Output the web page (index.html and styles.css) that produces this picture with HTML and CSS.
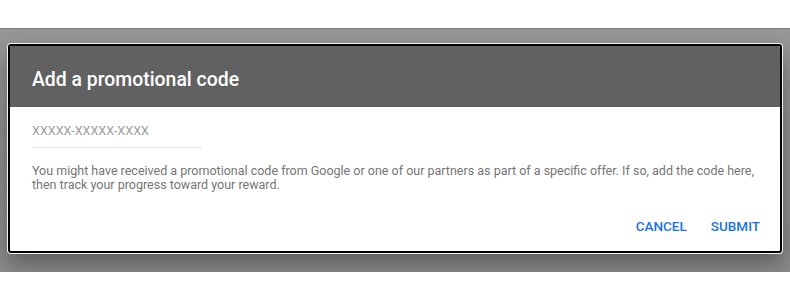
FILE: index.html
```html
<!DOCTYPE html>
<html lang="en">
<head>
<meta charset="utf-8">
<title>Add a promotional code</title>
<link rel="stylesheet" href="styles.css">
</head>
<body>
<div class="backdrop">
  <div class="dialog">
    <div class="dialog-header">
      <h1 class="dialog-title">Add a promotional code</h1>
    </div>
    <div class="dialog-body">
      <div class="field"><span class="placeholder">XXXXX-XXXXX-XXXX</span></div>
      <p class="note">You might have received a promotional code from Google or one of our partners as part of a specific offer. If so, add the code here, then track your progress toward your reward.</p>
    </div>
    <div class="actions">
      <button class="btn" type="button">CANCEL</button>
      <button class="btn" type="button">SUBMIT</button>
    </div>
  </div>
</div>
</body>
</html>
```
FILE: styles.css
```css
html, body {
  margin: 0;
  padding: 0;
  background: #ffffff;
  font-family: Roboto, "Liberation Sans", Arial, sans-serif;
}

.backdrop {
  margin-top: 28px;
  height: 244px;
  box-sizing: border-box;
  padding: 16px 8px 0 8px;
  background: linear-gradient(#979797, #8d8d8d 40%, #8a8a8a);
  border-top: 1px solid #808080;
}

.dialog {
  box-sizing: border-box;
  height: 209px;
  margin-top: -1px;
  border: 2px solid #000;
  border-radius: 3px;
  background: #fff;
  overflow: hidden;
  box-shadow: 0 0 0 1px #f4f4f4, 0 10px 22px rgba(0, 0, 0, 0.35);
  display: flex;
  flex-direction: column;
}

.dialog-header {
  background: #616161;
  height: 61px;
  box-sizing: border-box;
  padding: 22px 22px 15px 22px;
}

.dialog-title {
  margin: 0;
  color: #ffffff;
  font-size: 19.4px;
  line-height: 24px;
  font-weight: 500;
}

.dialog-body {
  padding: 16px 16px 0 22px;
}

.field {
  width: 170px;
  height: 16px;
  padding-bottom: 8px;
  border-bottom: 1px solid #e2e2e2;
  font-size: 12.6px;
  line-height: 16px;
}

.placeholder {
  color: #9e9e9e;
}

.note {
  margin: 16px 0 0 0;
  font-size: 12.5px;
  line-height: 14px;
  color: #757575;
}

.actions {
  margin-top: 26px;
  display: flex;
  justify-content: flex-end;
  gap: 24px;
  padding-right: 20px;
}

.btn {
  border: 0;
  background: transparent;
  padding: 0;
  margin: 0;
  font-family: Roboto, "Liberation Sans", Arial, sans-serif;
  font-size: 13.5px;
  line-height: 16px;
  font-weight: 500;
  color: #1a73e8;
  cursor: pointer;
}
```
